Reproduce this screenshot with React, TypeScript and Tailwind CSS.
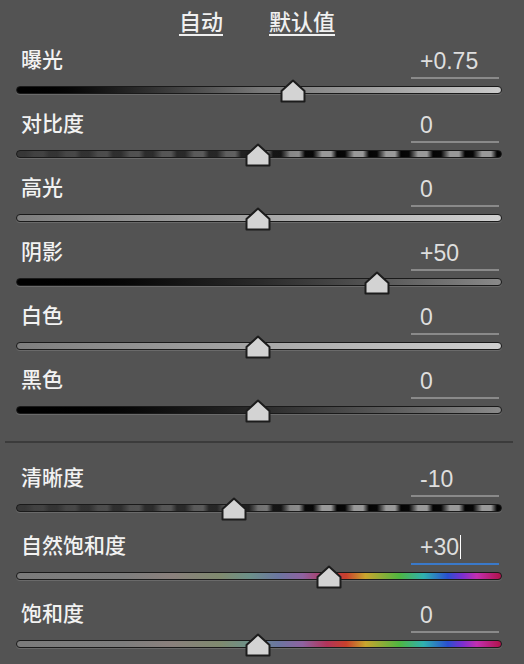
const font = { fontFamily: '"Liberation Sans", "Noto Sans CJK SC", sans-serif' };

type Row = {
  label: string;
  value: string;
  pos: number; // thumb center, px from track left
  track: string;
  active?: boolean;
};

const gray = "bg-linear-to-r from-black via-[#777777] to-[#cbcbcb]";
const light = "bg-linear-to-r from-[#7e7e7e] to-[#d0d0d0]";
const dark = "bg-linear-to-r from-black via-[#2a2a2a] to-[#8a8a8a]";
const contrast =
  "bg-[linear-gradient(to_right,rgba(58,58,58,0.95),rgba(58,58,58,0.6)_45%,rgba(58,58,58,0)_62%),repeating-linear-gradient(to_right,#030303_0px,#060606_8px,#999999_17px,#999999_26px,#030303_32px)]";
const color =
  "bg-[linear-gradient(to_right,#7b7b7b_0%,#7d7d7d_22%,#8a807c_32%,#7f8a6f_42%,#6c9089_48%,#6b76a0_54%,#8e62a0_59%,#b2345a_64%,#c8402c_68%,#c9a52e_72%,#4fb641_79%,#2fb1b0_84%,#2a4fd0_89%,#7a2fd0_92%,#c22fb0_95%,#b0124a_100%)]";

const top: Row[] = [
  { label: "曝光", value: "+0.75", pos: 277, track: gray },
  { label: "对比度", value: "0", pos: 242, track: contrast },
  { label: "高光", value: "0", pos: 242, track: light },
  { label: "阴影", value: "+50", pos: 361, track: dark },
  { label: "白色", value: "0", pos: 242, track: light },
  { label: "黑色", value: "0", pos: 242, track: dark },
];

const bottom: Row[] = [
  { label: "清晰度", value: "-10", pos: 218, track: contrast },
  { label: "自然饱和度", value: "+30", pos: 313, track: color, active: true },
  { label: "饱和度", value: "0", pos: 242, track: color },
];

function Thumb({ pos }: { pos: number }) {
  return (
    <svg
      className="absolute top-0"
      style={{ left: pos - 13 }}
      width="26"
      height="24"
      viewBox="0 0 26 24"
    >
      <path
        d="M13 1.5 L24.5 12 L24.5 22.5 L1.5 22.5 L1.5 12 Z"
        fill="#d3d3d3"
        stroke="#1c1c1c"
        strokeWidth="2"
        strokeLinejoin="round"
      />
    </svg>
  );
}

function Slider({ row, tall }: { row: Row; tall?: boolean }) {
  return (
    <div className={tall ? "h-[68px]" : "h-[64px]"}>
      <div className="flex justify-between items-start h-[34px] pl-[21px] pr-[25px]">
        <span className="text-[21px] leading-[30px] font-medium text-[#f2f2f2]">{row.label}</span>
        <div
          className={
            "w-[88px] h-[34px] pl-[9px] pt-[2px] border-b-2 text-[23px] leading-[28px] text-[#dedede] flex items-start " +
            (row.active ? "border-[#3a79c9]" : "border-[#8a8a8a]")
          }
        >
          <span>{row.value}</span>
          {row.active && <span className="w-px h-[24px] bg-white ml-px mt-[2px]" />}
        </div>
      </div>
      <div className="relative h-[30px] ml-[16px] w-[486px]">
        <div className="pt-[7px]">
          <div
            className={
              "h-[8px] rounded-full border border-[#1a1a1a] shadow-[0_1px_0_#6a6a6a] " +
              row.track
            }
          />
        </div>
        <Thumb pos={row.pos} />
      </div>
    </div>
  );
}

export default function App() {
  return (
    <div className="w-[524px] h-[664px] overflow-hidden bg-[#535353]" style={font}>
      <div className="h-[45px] flex items-center justify-center gap-[46px] pr-[10px] text-[22px] font-medium text-[#f0f0f0]">
        <span className="underline underline-offset-[4px] decoration-[1.5px]">自动</span>
        <span className="underline underline-offset-[4px] decoration-[1.5px]">默认值</span>
      </div>
      {top.map((r) => (
        <Slider key={r.label} row={r} />
      ))}
      <div className="mt-[12px] mb-[20px] ml-[5px] mr-[11px] h-[2px] bg-[#3b3b3b]" />
      {bottom.map((r) => (
        <Slider key={r.label} row={r} tall />
      ))}
    </div>
  );
}
